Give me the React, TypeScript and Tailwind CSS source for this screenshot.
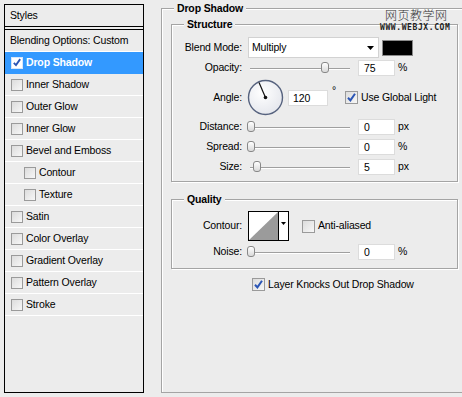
import type { ReactNode } from 'react';

const STYLE_ITEMS: { label: string; checked?: boolean; active?: boolean; indent?: boolean }[] = [
	{ label: 'Drop Shadow', checked: true, active: true },
	{ label: 'Inner Shadow' },
	{ label: 'Outer Glow' },
	{ label: 'Inner Glow' },
	{ label: 'Bevel and Emboss' },
	{ label: 'Contour', indent: true },
	{ label: 'Texture', indent: true },
	{ label: 'Satin' },
	{ label: 'Color Overlay' },
	{ label: 'Gradient Overlay' },
	{ label: 'Pattern Overlay' },
	{ label: 'Stroke' },
];

function CheckBox({ checked, large, onBlue }: { checked?: boolean; large?: boolean; onBlue?: boolean }) {
	const size = large ? 'h-[13px] w-[13px]' : 'h-[12px] w-[12px]';
	const skin = onBlue
		? 'border-[#d6e6fb] bg-white'
		: 'border-[#9a9a9a] bg-linear-to-br from-[#dcdcdc] to-[#f7f7f7]';
	return (
		<div className={`${size} ${skin} flex shrink-0 items-center justify-center border`}>
			{checked ? (
				<svg width="11" height="11" viewBox="0 0 11 11" className="block">
					<path d="M2 5.8 L4.4 8.4 L9 1.8" fill="none" stroke="#2b55b5" strokeWidth="2" />
				</svg>
			) : null}
		</div>
	);
}

function Slider({ thumb }: { thumb: number }) {
	return (
		<div className="relative ml-[5px] h-[14px] w-[103px] shrink-0">
			<div className="absolute left-[3px] right-0 top-[7px] h-px bg-[#9f9f9f] shadow-[0_1px_0_#fff]" />
			<div
				className="absolute top-[1px] h-[11px] w-[8px] rounded-[3px] border border-[#888] bg-linear-to-b from-white to-[#d9d9d9]"
				style={{ left: thumb }}
			/>
		</div>
	);
}

function NumBox({ value, wide }: { value: string; wide?: boolean }) {
	return (
		<div
			className={`${wide ? 'w-[40px] pl-[4px]' : 'w-[37px] pl-[5px]'} flex h-[16px] shrink-0 items-center border border-[#dcdcdc] bg-white leading-[14px]`}
		>
			{value}
		</div>
	);
}

function Label({ children }: { children: ReactNode }) {
	return <div className="w-[70px] shrink-0 text-right">{children}</div>;
}

function SliderRow({ label, thumb, value, unit }: { label: string; thumb: number; value: string; unit: string }) {
	return (
		<div className="flex h-[20px] items-center">
			<Label>{label}</Label>
			<Slider thumb={thumb} />
			<div className="ml-[8px]">
				<NumBox value={value} />
			</div>
			<div className="ml-[3px]">{unit}</div>
		</div>
	);
}

function GroupBox({ title, children, className }: { title: string; children: ReactNode; className?: string }) {
	return (
		<fieldset className={`w-[287px] border border-[#a4a4a4] shadow-[inset_1px_1px_0_#fff,1px_1px_0_#fff] ${className ?? ''}`}>
			<legend className="ml-[12px] bg-[#ececec] px-[3px] font-bold leading-[14px]">{title}</legend>
			{children}
		</fieldset>
	);
}

function AngleDial() {
	return (
		<svg width="37" height="37" viewBox="0 0 37 37" className="ml-[5px] block shrink-0">
			<defs>
				<radialGradient id="dial" cx="0.4" cy="0.35" r="0.7">
					<stop offset="0" stopColor="#ffffff" />
					<stop offset="1" stopColor="#e4e6ec" />
				</radialGradient>
			</defs>
			<circle cx="18.5" cy="18.5" r="17" fill="url(#dial)" stroke="#56627e" strokeWidth="1.4" />
			<line x1="18.5" y1="18.5" x2="12" y2="3.5" stroke="#111" strokeWidth="1.2" />
			<circle cx="18.5" cy="18.5" r="1.8" fill="#111" />
		</svg>
	);
}

export default function App() {
	return (
		<div className="relative flex h-[397px] w-[462px] items-start overflow-hidden bg-[#ececec] font-['Liberation_Sans',Arial,sans-serif] text-[10.5px] tracking-[-0.15px] text-black">
			{/* styles list */}
			<div className="ml-[4px] mt-[4px] flex h-[389px] w-[140px] shrink-0 flex-col border border-black">
				<div className="flex h-[22px] items-center border-b border-black pl-[5px]">Styles</div>
				<div className="mt-[2px] flex flex-1 flex-col border-t border-black">
					<div className="flex h-[22px] items-center border-b border-white pl-[5px]">Blending Options: Custom</div>
					{STYLE_ITEMS.map((item) => (
						<div
							key={item.label}
							className={`flex h-[22px] items-center gap-[3px] border-b ${item.indent ? 'pl-[19px]' : 'pl-[6px]'} ${
								item.active ? 'border-[#3399ff] bg-[#3399ff] font-bold text-white' : 'border-white'
							}`}
						>
							<CheckBox checked={item.checked} onBlue={item.active} />
							<span>{item.label}</span>
						</div>
					))}
				</div>
			</div>

			{/* drop shadow settings */}
			<fieldset className="ml-[17px] mt-[1px] h-[392px] w-[330px] shrink-0 border border-[#a4a4a4] shadow-[inset_1px_1px_0_#fff]">
				<legend className="ml-[12px] bg-[#ececec] px-[3px] font-bold leading-[14px]">Drop Shadow</legend>
				<div className="flex flex-col pl-[9px] pt-[2px]">
					<GroupBox title="Structure">
						<div className="flex flex-col pb-[4px]">
							<div className="mt-[6px] flex h-[21px] items-center">
								<Label>Blend Mode:</Label>
								<div className="ml-[6px] flex h-[21px] w-[131px] items-center justify-between border border-[#d2d2d2] bg-white pl-[3px] pr-[4px]">
									<span>Multiply</span>
									<svg width="7" height="4" viewBox="0 0 7 4" className="block">
										<path d="M0 0 H7 L3.5 4 Z" fill="#000" />
									</svg>
								</div>
								<div className="ml-[3px] h-[16px] w-[31px] border border-[#8a8a8a] bg-black" />
							</div>
							<SliderRow label="Opacity:" thumb={74} value="75" unit="%" />
							<div className="flex h-[39px] items-center">
								<Label>Angle:</Label>
								<AngleDial />
								<div className="ml-[4px]">
									<NumBox value="120" wide />
								</div>
								<div className="ml-[4px] self-start pt-[6px] leading-[12px]">°</div>
								<div className="ml-[9px] flex items-center gap-[3px]">
									<CheckBox checked large />
									<span>Use Global Light</span>
								</div>
							</div>
							<SliderRow label="Distance:" thumb={0} value="0" unit="px" />
							<SliderRow label="Spread:" thumb={0} value="0" unit="%" />
							<SliderRow label="Size:" thumb={6} value="5" unit="px" />
						</div>
					</GroupBox>

					<GroupBox title="Quality" className="mt-[10px]">
						<div className="flex flex-col pb-[6px]">
							<div className="mt-[5px] flex h-[30px] items-center">
								<Label>Contour:</Label>
								<div className="ml-[6px] flex h-[30px] w-[41px] border border-black bg-white">
									<svg width="29" height="28" viewBox="0 0 29 28" className="block">
										<rect width="29" height="28" fill="#fff" />
										<polygon points="0,28 29,0 29,28" fill="#9b9b9b" />
									</svg>
									<div className="flex flex-1 justify-center border-l border-black pt-[10px]">
										<svg width="5" height="3" viewBox="0 0 5 3" className="block">
											<path d="M0 0 H5 L2.5 3 Z" fill="#000" />
										</svg>
									</div>
								</div>
								<div className="ml-[13px] flex items-center gap-[3px]">
									<CheckBox large />
									<span>Anti-aliased</span>
								</div>
							</div>
							<div className="flex h-[21px] items-center">
								<Label>Noise:</Label>
								<Slider thumb={0} />
								<div className="ml-[8px]">
									<NumBox value="0" />
								</div>
								<div className="ml-[3px]">%</div>
							</div>
						</div>
					</GroupBox>

					<div className="ml-[81px] mt-[8px] flex items-center gap-[3px]">
						<CheckBox checked large />
						<span>Layer Knocks Out Drop Shadow</span>
					</div>
				</div>
			</fieldset>

			{/* watermark */}
			<div className="absolute left-[385px] top-[8px] flex flex-col items-start">
				<span className="font-['Noto_Sans_CJK_SC',sans-serif] text-[12px] font-light leading-[14px] tracking-[0.5px] text-[#333]">
					网页教学网
				</span>
				<span className="-ml-[5px] mt-[2px] font-['DejaVu_Sans_Mono',monospace] text-[8px] font-bold leading-[8px] tracking-[0.6px] text-[#222]">
					WWW.WEBJX.COM
				</span>
			</div>
		</div>
	);
}
